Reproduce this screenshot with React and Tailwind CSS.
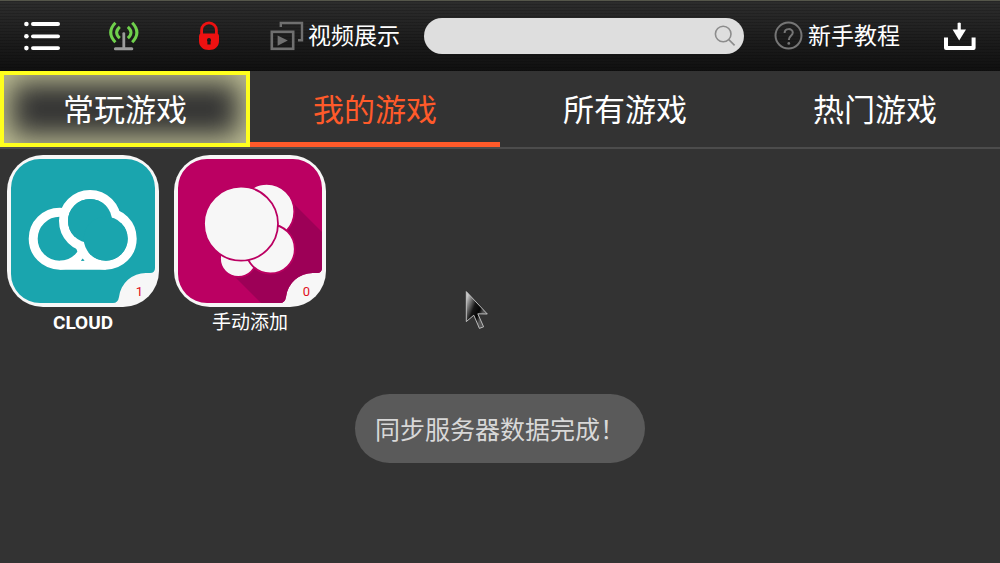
import React, { useState } from 'react';
import clsx from 'clsx';

const tabs = ['常玩游戏', '我的游戏', '所有游戏', '热门游戏'];

// Rounded tile face with the bottom right corner cut out for the counter
const TILE_PATH =
    'M33 4H119A29 29 0 0 1 148 33V113Q148 118 143 118H139A27 27 0 0 0 112 142Q111 148 106 148H33A29 29 0 0 1 4 119V33A29 29 0 0 1 33 4Z';

const CloudArt = () => (
    <svg viewBox="0 0 152 152" className="block size-full" aria-hidden="true">
        <path d={TILE_PATH} fill="#1aa5ae" />
        <g fill="none" stroke="#fff" strokeWidth="9">
            <circle cx="52.7" cy="83.7" r="26.5" />
            <circle cx="83" cy="66" r="26.5" fill="#1aa5ae" />
            <circle cx="98.7" cy="83.7" r="26.5" />
            <path d="M52.7 110.2H98.7" />
        </g>
        <g fill="#1aa5ae">
            <circle cx="83" cy="66" r="22" />
            <circle cx="98.7" cy="83.7" r="22" />
            <path d="M75.7 103.6L73.8 105.7H77.6Z" />
        </g>
    </svg>
);

const BubblesArt = () => (
    <svg viewBox="0 0 152 152" className="block size-full" aria-hidden="true">
        <clipPath id="tile-face">
            <path d={TILE_PATH} />
        </clipPath>
        <path d={TILE_PATH} fill="#bb0062" />
        <path d="M117 46L150 79V152H91L57 118Z" fill="#9d0057" clipPath="url(#tile-face)" />
        <g fill="#f7f7f7" stroke="#bb0062" strokeWidth="1.8">
            <circle cx="64.3" cy="103.7" r="18.3" />
            <circle cx="92.7" cy="56.5" r="27.6" />
            <circle cx="96.3" cy="94" r="24.5" />
            <circle cx="67" cy="68.7" r="37" />
        </g>
    </svg>
);

const games = [
    { id: 'cloud', name: 'CLOUD', count: 1, bold: true, Art: CloudArt },
    { id: 'manual', name: '手动添加', count: 0, bold: false, Art: BubblesArt },
];

const MenuIcon = () => (
    <svg viewBox="0 0 37 30" className="h-[30px] w-[37px]" fill="#fff" aria-hidden="true">
        <circle cx="2.4" cy="3" r="2.3" />
        <circle cx="2.4" cy="15.3" r="2.3" />
        <circle cx="2.4" cy="27.1" r="2.3" />
        <rect x="7" y="1.1" width="29" height="3.8" rx="1.9" />
        <rect x="7" y="13.4" width="29" height="3.8" rx="1.9" />
        <rect x="7" y="25.2" width="29" height="3.8" rx="1.9" />
    </svg>
);

const SignalIcon = () => (
    <svg viewBox="0 0 30 30" className="size-[30px]" fill="none" aria-hidden="true">
        <g stroke="#6fd04c" strokeWidth="3">
            <path d="M6.4 1.8Q-3 11.5 6.4 21.2" />
            <path d="M10.8 5.8Q4.4 11.5 10.8 17.2" />
            <path d="M23.2 1.8Q32.6 11.5 23.2 21.2" />
            <path d="M18.8 5.8Q25.2 11.5 18.8 17.2" />
        </g>
        <path d="M14.8 12.6V27" stroke="#9b9b9b" strokeWidth="2.8" strokeLinecap="round" />
        <path d="M6.4 27.7H22.8" stroke="#9b9b9b" strokeWidth="3" strokeLinecap="round" />
    </svg>
);

const LockIcon = () => (
    <svg viewBox="0 0 22 30" className="h-[30px] w-[22px]" aria-hidden="true">
        <path d="M3.6 16V9A7.4 7.2 0 0 1 18.4 9V16" fill="none" stroke="#ee1111" strokeWidth="2.8" />
        <path
            fillRule="evenodd"
            fill="#ee1111"
            d="M3 12.4H19Q21 12.4 21 15V20C21 25.6 17 29 11 29S1 25.6 1 20V15Q1 12.4 3 12.4ZM11 17A2.1 2.1 0 0 0 9.4 20.4V23.6H12.6V20.4A2.1 2.1 0 0 0 11 17Z"
        />
    </svg>
);

const VideoIcon = () => (
    <svg viewBox="0 0 34 30" className="h-[30px] w-[34px]" fill="none" stroke="#6f6f6f" aria-hidden="true">
        <path d="M10.8 6V2H32V19.2H28" strokeWidth="2.4" />
        <rect x="1.8" y="10.8" width="21.4" height="17" strokeWidth="2.6" />
        <path d="M7.6 14.4L17.8 19.6L7.6 24.8Z" fill="#6f6f6f" stroke="none" />
    </svg>
);

const HelpIcon = () => (
    <svg viewBox="0 0 30 30" className="size-[30px]" fill="none" stroke="#767676" aria-hidden="true">
        <circle cx="14.5" cy="14.6" r="13" strokeWidth="2" />
        <path d="M10.6 12C10.6 6.8 18.8 7 18.8 11.6C18.8 14.8 14.8 15 14.8 19" strokeWidth="2" />
        <circle cx="14.8" cy="22.4" r="1.4" fill="#767676" stroke="none" />
    </svg>
);

const DownloadIcon = () => (
    <svg viewBox="0 0 32 30" className="h-[30px] w-[32px]" aria-hidden="true">
        <path d="M2 16.4V27H29.6V16.4" fill="none" stroke="#fff" strokeWidth="4" strokeLinejoin="round" />
        <path d="M13.6 2Q15.2 0.8 16.8 2V8.4H22L15.2 19.4L8.6 8.4H13.6Z" fill="#fff" />
    </svg>
);

const SearchIcon = () => (
    <svg viewBox="0 0 22 22" className="size-[22px]" fill="none" stroke="#8c8c8c" strokeWidth="1.6" aria-hidden="true">
        <circle cx="9.2" cy="9" r="7.8" />
        <path d="M14.8 14.6L20.6 20.4" />
    </svg>
);

const Pointer = () => (
    <svg viewBox="0 0 24 40" className="pointer-events-none absolute left-[465px] top-[290px] h-10 w-6" aria-hidden="true">
        <linearGradient id="pointer-fill" x1="0" y1="0.2" x2="0.7" y2="0.7">
            <stop offset="0" stopColor="#c8c8c8" />
            <stop offset="0.5" stopColor="#161616" />
            <stop offset="0.8" stopColor="#050505" />
            <stop offset="1" stopColor="#555" />
        </linearGradient>
        <path d="M1.3 1.6V31.6L8.8 25.2L14.4 38.4L18.6 36.8L12.8 23.8L22.3 24Z" fill="url(#pointer-fill)" stroke="#c9c9c9" strokeWidth="0.9" />
    </svg>
);

function Header() {
    return (
        <header className="flex h-[71px] items-center border-t border-[#55564a] bg-[repeating-linear-gradient(0deg,rgba(0,0,0,0.16)_0px,rgba(0,0,0,0.16)_1px,transparent_1px,transparent_3px),linear-gradient(180deg,#2d2d2d,#1e1e1e_50%,#101010)] px-6 text-[23px] leading-8 text-white">
            <button type="button" aria-label="菜单"><MenuIcon /></button>
            <button type="button" aria-label="信号" className="ml-12"><SignalIcon /></button>
            <button type="button" aria-label="锁定" className="ml-[59px]"><LockIcon /></button>
            <a href="#videos" className="ml-[50px] flex items-center gap-1 whitespace-nowrap">
                <VideoIcon />
                <span className="pb-1">视频展示</span>
            </a>
            <form role="search" className="ml-6 flex h-9 min-w-0 flex-1 items-center rounded-full bg-[#dedede] pl-4 pr-2" onSubmit={(e) => e.preventDefault()}>
                <input type="text" aria-label="搜索" className="min-w-0 flex-1 bg-transparent text-base text-gray-800 outline-none" />
                <button type="submit" aria-label="搜索"><SearchIcon /></button>
            </form>
            <a href="#guide" className="ml-[30px] flex items-center gap-1 whitespace-nowrap">
                <HelpIcon />
                <span className="pb-1">新手教程</span>
            </a>
            <button type="button" aria-label="下载" className="ml-11"><DownloadIcon /></button>
        </header>
    );
}

export default function App() {
    const [active, setActive] = useState(1);

    return (
        <div className="relative min-h-screen bg-[#333333] font-['Noto_Sans_CJK_SC',sans-serif]">
            <Header />

            {/* Pestañas */}
            <nav className="grid grid-cols-4 border-b-2 border-[#4c4c4c]">
                {tabs.map((tab, index) => (
                    <button
                        key={tab}
                        type="button"
                        onClick={() => setActive(index)}
                        className={clsx(
                            'h-[76px] pb-1 text-[31px] leading-none',
                            index === 0 && 'border-4 border-[#ffff1e] shadow-[inset_0_0_28px_7px_#c2c298]',
                            index === active && index !== 0 && 'border-b-[5px] border-b-[#ff5a2a] pt-[5px]',
                            index === active ? 'text-[#ff5a2a]' : 'text-white'
                        )}
                    >
                        {tab}
                    </button>
                ))}
            </nav>

            {/* Lista de juegos */}
            <ul className="flex flex-wrap gap-[15px] px-[7px] pt-[6px]">
                {games.map(({ id, name, count, bold, Art }) => (
                    <li key={id}>
                        <button type="button" className="block w-[152px] text-center text-white">
                            <span className="relative block h-[152px] overflow-hidden rounded-[36px] bg-[#f7f7f7]">
                                <Art />
                                <span className="absolute bottom-[9px] right-4 font-[Roboto,sans-serif] text-[13px] leading-none text-[#e0101c]">
                                    {count}
                                </span>
                            </span>
                            <span className={clsx('block', bold ? 'font-[Roboto,sans-serif] text-[19px] font-bold leading-8' : 'text-[19px] leading-7')}>
                                {name}
                            </span>
                        </button>
                    </li>
                ))}
            </ul>

            <Pointer />

            <div role="status" className="absolute bottom-[100px] left-1/2 -translate-x-1/2 whitespace-nowrap rounded-full bg-[#5a5a5a] px-5 py-4 text-[25px] leading-[37px] text-[#d8d8d8]">
                同步服务器数据完成！
            </div>
        </div>
    );
}
